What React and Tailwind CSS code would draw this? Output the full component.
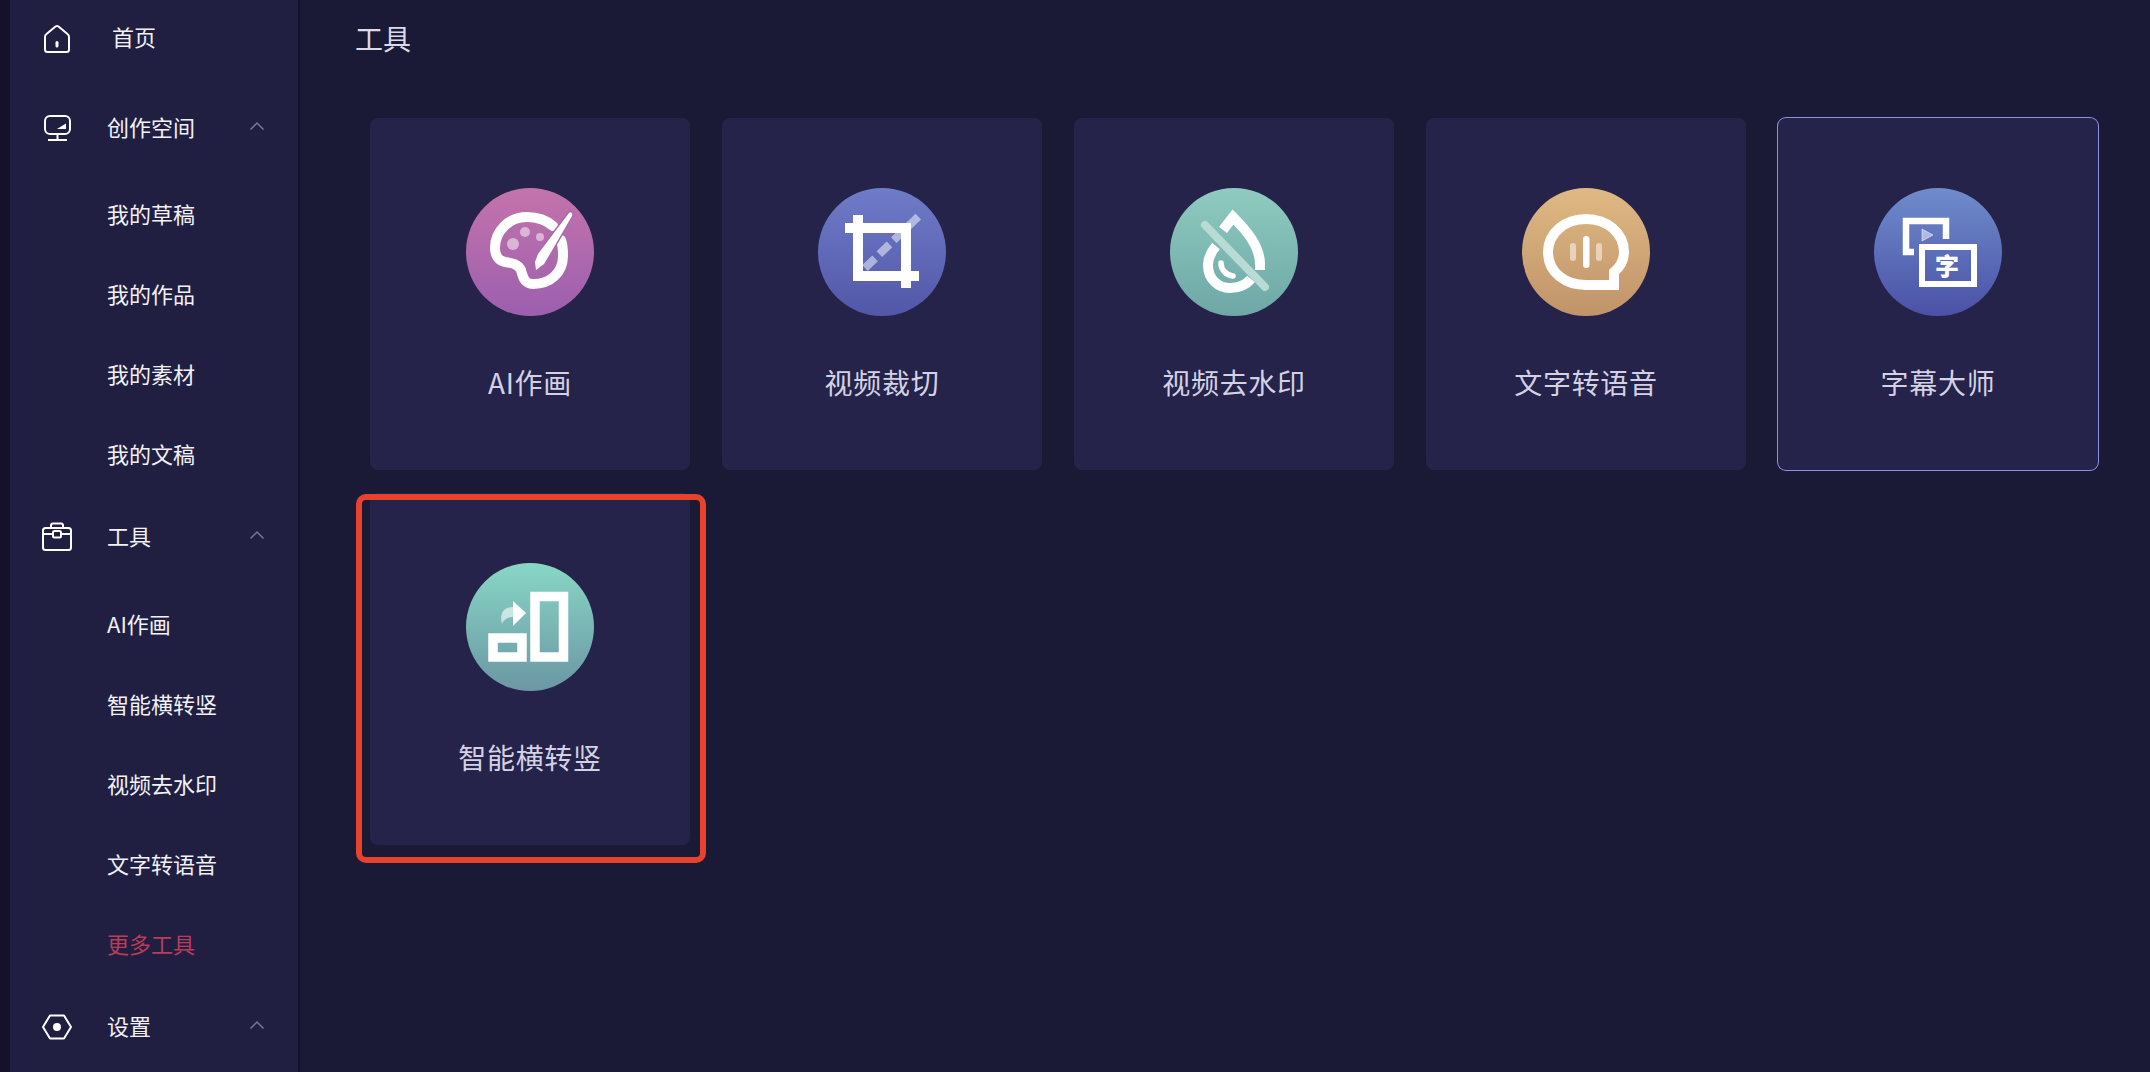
const SUB_TEXT = 'text-[22px] leading-none text-[#f1f1f6] -mt-[4px]';

function HomeIcon() {
  return (
    <svg width="30" height="30" viewBox="0 0 30 30" fill="none" stroke="white" strokeWidth="2">
      <path d="M3 14 Q3 12 4.500 11 L13.500 3.500 Q15 2.500 16.500 3.500 L25.500 11 Q27 12 27 14 V26.500 Q27 29 24.500 29 H5.500 Q3 29 3 26.500 Z" strokeLinejoin="round" />
      <rect x="13.500" y="18" width="3" height="6.500" rx="1.500" fill="white" stroke="none" />
    </svg>
  );
}

function MonitorIcon() {
  return (
    <svg width="30" height="30" viewBox="0 0 30 30" fill="none" stroke="white" strokeWidth="2">
      <rect x="3" y="3" width="25" height="18" rx="5" />
      <path d="M15.500 21 V26 M6 27 H25" />
      <path d="M15 16 L24 10.500 V16 Z" fill="white" stroke="none" />
    </svg>
  );
}

function CaseIcon() {
  return (
    <svg width="30" height="30" viewBox="0 0 30 30" fill="none" stroke="white" strokeWidth="2">
      <rect x="1" y="6" width="28" height="22" rx="2.500" />
      <path d="M9 6 V3.500 Q9 1.500 11 1.500 H19 Q21 1.500 21 3.500 V6 M1 12 H11 M19 12 H29" />
      <rect x="11" y="9" width="8" height="6.500" rx="1.500" />
    </svg>
  );
}

function HexIcon() {
  return (
    <svg width="30" height="26" viewBox="0 0 30 26" fill="none" stroke="white" strokeWidth="2">
      <path d="M8 1.500 H22 L29 13 L22 24.500 H8 L1 13 Z" strokeLinejoin="round" />
      <circle cx="15" cy="13" r="4" fill="white" stroke="none" />
    </svg>
  );
}

function Chevron() {
  return (
    <svg width="16" height="10" viewBox="0 0 16 10" fill="none" stroke="#77769a" strokeWidth="1.500">
      <path d="M1.500 8.500 L8 2 L14.500 8.500" />
    </svg>
  );
}

function PaletteGlyph() {
  return (
    <svg width="128" height="128" viewBox="0 0 128 128" fill="none">
      <path d="M87 38 C79 31 70 29 61 29 C43 29 29 43 29 60 C29 68 33 73 39 74 C46 75 52 76 55 82 C57 90 59 96 67 96 C84 96 97 85 97 68 C97 62 97 57 95 52" stroke="white" strokeWidth="10" strokeLinecap="round" />
      <circle cx="47" cy="56" r="6" fill="white" fillOpacity="0.5" />
      <circle cx="59" cy="44" r="5" fill="white" fillOpacity="0.5" />
      <circle cx="74" cy="49" r="4" fill="white" fillOpacity="0.5" />
      <path d="M103 25 C105 23 107 25 106 28 L84 66 L78 76 L70 82 L69 74 L72 66 Z" fill="white" stroke="#a96bae" strokeWidth="3" paintOrder="stroke" />
    </svg>
  );
}

function CropGlyph() {
  return (
    <svg width="128" height="128" viewBox="0 0 128 128" fill="none">
      <path d="M47 80 L102 27" stroke="white" strokeOpacity="0.5" strokeWidth="8" strokeDasharray="14 6" />
      <path d="M27 40 H88 V100 M40 27 V88 H101" stroke="white" strokeWidth="10" />
    </svg>
  );
}

function DropGlyph() {
  return (
    <svg width="128" height="128" viewBox="0 0 128 128" fill="none">
      <path d="M53 42 L63 29 C76 42 90 58 90 76 V82" stroke="white" strokeWidth="10" />
      <path d="M46 58 C41 64 38 70 38 77 C38 92 49 100 60 100 C68 100 76 97 81 91" stroke="white" strokeWidth="10" />
      <path d="M51 75 C51 82 56 87 63 88" stroke="white" strokeWidth="5.500" strokeLinecap="round" />
      <path d="M35 37 L95 99" stroke="#b8dcd5" strokeWidth="8" strokeLinecap="round" />
    </svg>
  );
}

function SpeechGlyph() {
  return (
    <svg width="128" height="128" viewBox="0 0 128 128" fill="none">
      <path d="M64 31 C43 31 26 45 26 64 C26 85 44 97 64 97 H92 V84 C98 79 102 72 102 64 C102 45 85 31 64 31 Z" stroke="white" strokeWidth="10" />
      <rect x="61" y="48" width="6.500" height="32" rx="3.250" fill="white" />
      <rect x="48" y="55" width="6" height="18" rx="3" fill="white" fillOpacity="0.5" />
      <rect x="74" y="55" width="6" height="18" rx="3" fill="white" fillOpacity="0.5" />
    </svg>
  );
}

function SubtitleGlyph() {
  return (
    <svg width="128" height="128" viewBox="0 0 128 128" fill="none">
      <path d="M40 64 H32 V33 H72 V51" stroke="white" strokeWidth="6.500" />
      <path d="M48 41 L59 47 L48 53 Z" fill="white" fillOpacity="0.5" stroke="white" strokeOpacity="0.5" strokeWidth="1" strokeLinejoin="round" />
      <rect x="48" y="59" width="52" height="37" stroke="white" strokeWidth="6" />
      <text x="73" y="87" textAnchor="middle" fill="white" fontSize="24" fontWeight="900" fontFamily="'Noto Sans CJK SC', sans-serif">字</text>
    </svg>
  );
}

function RotateGlyph() {
  return (
    <svg width="128" height="128" viewBox="0 0 128 128" fill="none">
      <rect x="27" y="75" width="29" height="19" stroke="white" strokeWidth="9.500" />
      <rect x="69" y="33.500" width="28.500" height="60.500" stroke="white" strokeWidth="9.500" />
      <path d="M47 38 L60 50 L47 63 Z" fill="white" />
      <path d="M36 61 C33 50 38 44 47 44 V54 C42 54 38 56 36 61 Z" fill="white" fillOpacity="0.6" />
    </svg>
  );
}

function ToolCard({ label, gradient, glyph, active, marked }) {
  return (
    <div className={`relative flex flex-col items-center rounded-lg bg-[#25234a] pt-[70px] ${active ? 'ring-1 ring-[#8d91e2]' : ''}`}>
      <div className={`flex size-[128px] items-center justify-center rounded-full bg-gradient-to-b ${gradient}`}>
        {glyph}
      </div>
      <div className="mt-[46px] text-[28px] leading-[40px] tracking-[0.7px] text-[#d3d2e4]">{label}</div>
      {marked && (
        <div className="absolute -left-[14px] top-px h-[369px] w-[350px] rounded-[10px] border-[6px] border-[#e8412c]" />
      )}
    </div>
  );
}

function NavHead({ icon, label }) {
  return (
    <div className="flex h-[84px] items-center pl-[32px] pr-[33px]">
      <span className="flex w-[30px] justify-center">{icon}</span>
      <span className={`ml-[35px] flex-1 ${SUB_TEXT}`}>{label}</span>
      <span className="-mt-[4px] flex"><Chevron /></span>
    </div>
  );
}

function NavItem({ label, accent }) {
  return (
    <div className={`flex h-[80px] items-center pb-[4px] pl-[97px] text-[22px] leading-none ${accent ? 'text-[#b93c5b]' : 'text-[#f1f1f6]'}`}>
      {label}
    </div>
  );
}

export default function App() {
  return (
    <div className="flex h-[1072px] overflow-hidden bg-[#1b1a36] font-['Noto_Sans_CJK_SC','Noto_Sans',sans-serif]">
      <div className="w-[10px] shrink-0 bg-[#13122a]" />
      <aside className="w-[288px] shrink-0 bg-[#201f42]">
        <div className="flex h-[76px] items-center pl-[32px]">
          <span className="flex w-[30px] justify-center"><HomeIcon /></span>
          <span className={`ml-[40px] ${SUB_TEXT}`}>首页</span>
        </div>
        <div className="mt-[10px]">
          <NavHead icon={<MonitorIcon />} label="创作空间" />
        </div>
        <div className="mt-[5px]">
          <NavItem label="我的草稿" />
          <NavItem label="我的作品" />
          <NavItem label="我的素材" />
          <NavItem label="我的文稿" />
        </div>
        <NavHead icon={<CaseIcon />} label="工具" />
        <div className="mt-[6px]">
          <NavItem label="AI作画" />
          <NavItem label="智能横转竖" />
          <NavItem label="视频去水印" />
          <NavItem label="文字转语音" />
          <NavItem label="更多工具" accent />
        </div>
        <NavHead icon={<HexIcon />} label="设置" />
      </aside>
      <div className="w-[2px] shrink-0 bg-[#14132b]" />
      <main className="flex-1 pl-[70px]">
        <div className="-ml-[15px] flex h-[76px] items-center text-[28px] leading-none text-[#dcdbe9]">工具</div>
        <div className="mt-[42px] grid grid-cols-[repeat(5,320px)] auto-rows-[352px] gap-x-[32px] gap-y-[23px]">
          <ToolCard label="AI作画" gradient="from-[#c473ab] to-[#9c5fae]" glyph={<PaletteGlyph />} />
          <ToolCard label="视频裁切" gradient="from-[#6f7cc8] to-[#5257a8]" glyph={<CropGlyph />} />
          <ToolCard label="视频去水印" gradient="from-[#8fcbbf] to-[#6ea7a6]" glyph={<DropGlyph />} />
          <ToolCard label="文字转语音" gradient="from-[#dfb983] to-[#c0946a]" glyph={<SpeechGlyph />} />
          <ToolCard label="字幕大师" gradient="from-[#6f8ccb] to-[#4b51a6]" glyph={<SubtitleGlyph />} active />
          <ToolCard label="智能横转竖" gradient="from-[#88d7c5] to-[#6b97a4]" glyph={<RotateGlyph />} marked />
        </div>
      </main>
    </div>
  );
}
